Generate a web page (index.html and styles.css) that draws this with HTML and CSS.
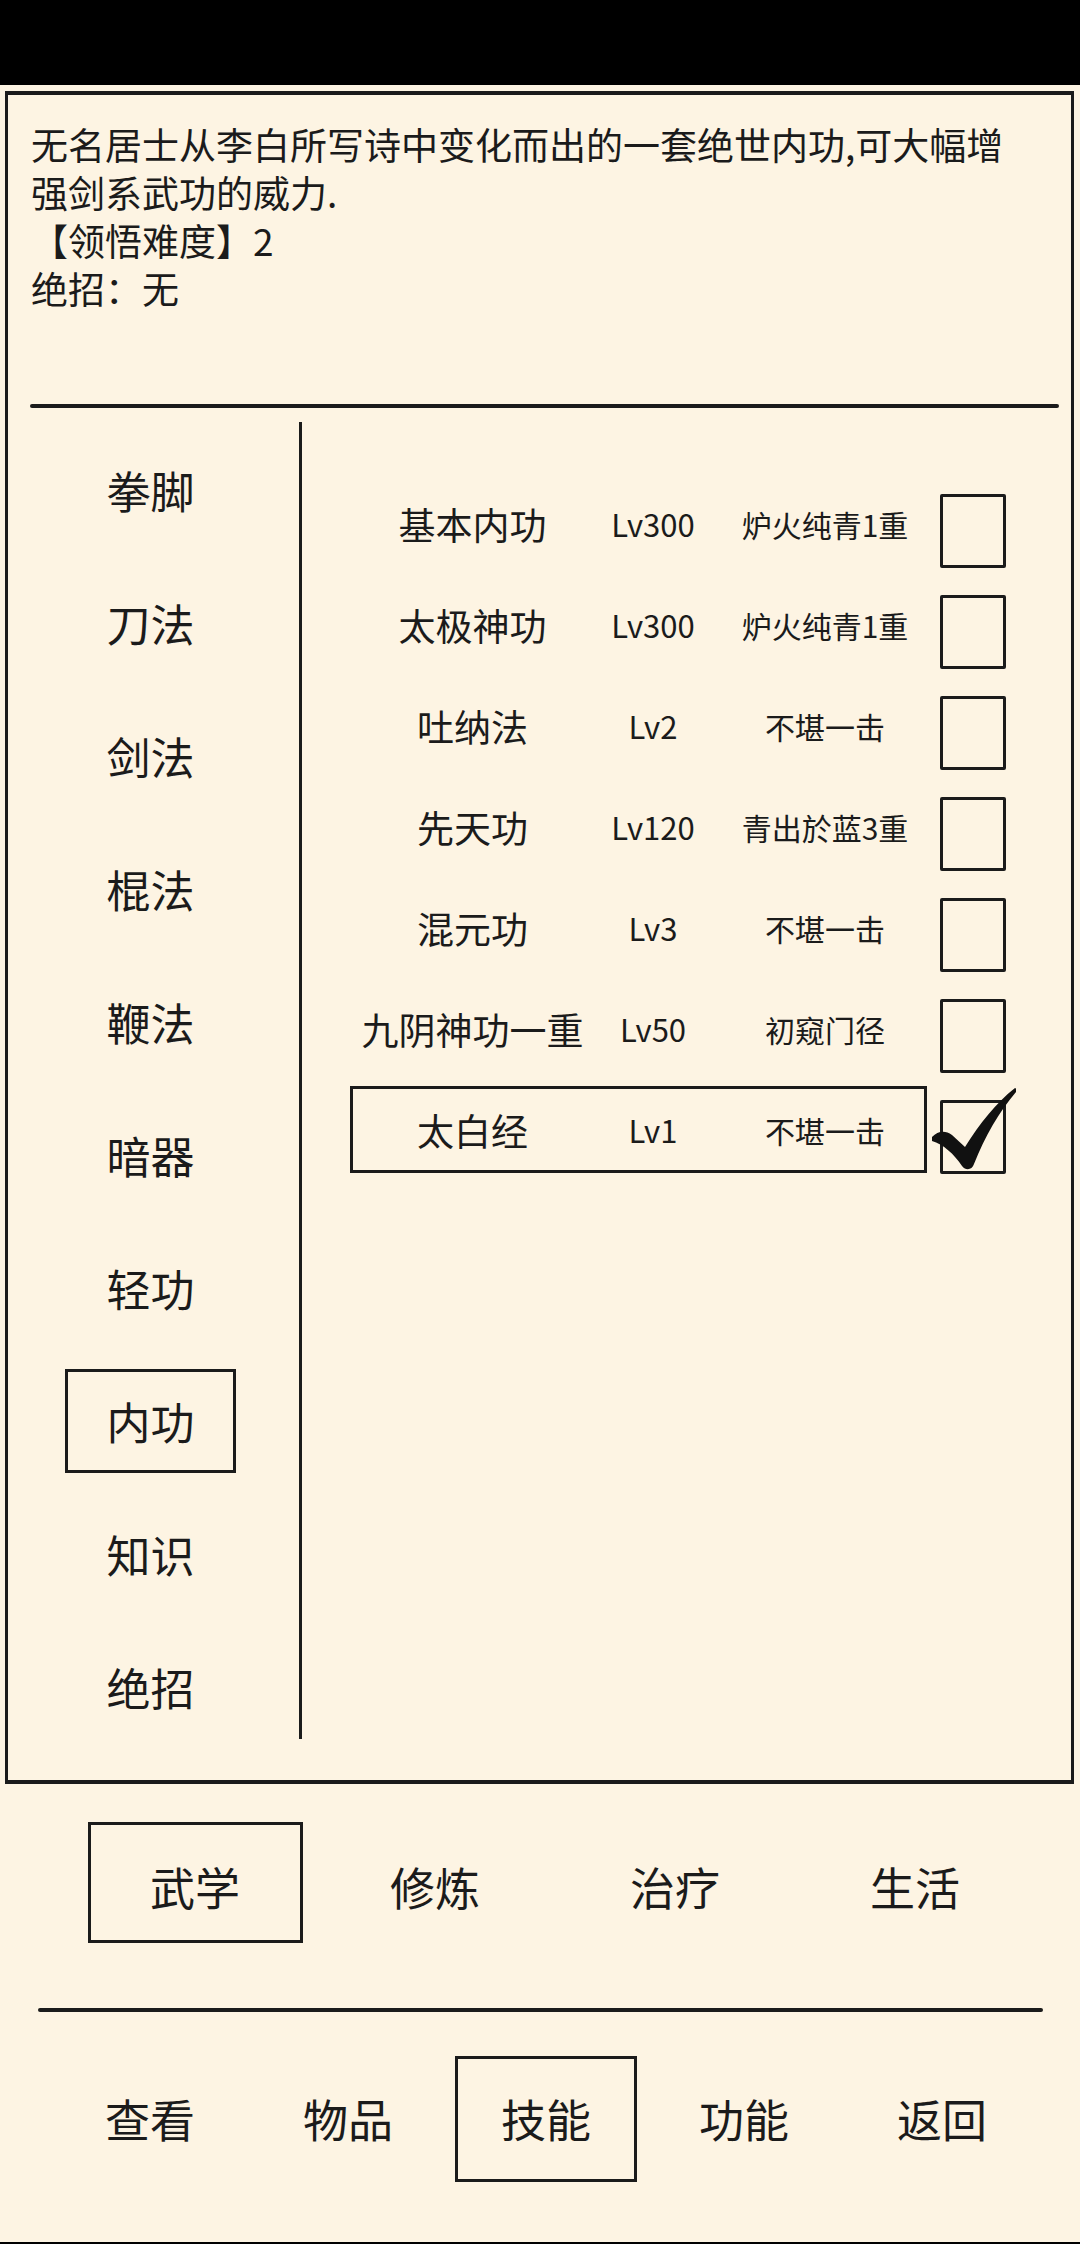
FILE: index.html
```html
<!DOCTYPE html>
<html lang="zh-CN">
<head>
<meta charset="utf-8">
<title>技能</title>
<link rel="stylesheet" href="styles.css">
</head>
<body>
<div class="status"></div>
<div class="panel">
  <div class="desc">
    <p>无名居士从李白所写诗中变化而出的一套绝世内功,可大幅增强剑系武功的威力.</p>
    <p>【领悟难度】2</p>
    <p>绝招：无</p>
  </div>
  <div class="hr"></div>
  <div class="main">
    <ul class="cats">
      <li><span>拳脚</span></li>
      <li><span>刀法</span></li>
      <li><span>剑法</span></li>
      <li><span>棍法</span></li>
      <li><span>鞭法</span></li>
      <li><span>暗器</span></li>
      <li><span>轻功</span></li>
      <li class="active"><span>内功</span></li>
      <li><span>知识</span></li>
      <li><span>绝招</span></li>
    </ul>
    <div class="vr"></div>
    <div class="skills">
      <div class="row"><div class="cell"><span class="name">基本内功</span><span class="lv">Lv300</span><span class="rank">炉火纯青1重</span></div><div class="check"></div></div>
      <div class="row"><div class="cell"><span class="name">太极神功</span><span class="lv">Lv300</span><span class="rank">炉火纯青1重</span></div><div class="check"></div></div>
      <div class="row"><div class="cell"><span class="name">吐纳法</span><span class="lv">Lv2</span><span class="rank">不堪一击</span></div><div class="check"></div></div>
      <div class="row"><div class="cell"><span class="name">先天功</span><span class="lv">Lv120</span><span class="rank">青出於蓝3重</span></div><div class="check"></div></div>
      <div class="row"><div class="cell"><span class="name">混元功</span><span class="lv">Lv3</span><span class="rank">不堪一击</span></div><div class="check"></div></div>
      <div class="row"><div class="cell"><span class="name">九阴神功一重</span><span class="lv">Lv50</span><span class="rank">初窥门径</span></div><div class="check"></div></div>
      <div class="row sel"><div class="cell"><span class="name">太白经</span><span class="lv">Lv1</span><span class="rank">不堪一击</span></div><div class="check on"><svg class="tick" viewBox="0 0 86 84" width="86" height="84"><path d="M2 51 C8 45 15 44 22 49 L35 61 C50 37 66 17 85 2 C87 3 87 5 86 6 C69 26 55 50 44 78 C42 84 36 85 32 80 C24 68 13 58 2 55 Z"/></svg></div></div>
    </div>
  </div>
</div>
<div class="tabs">
  <div class="tab active">武学</div>
  <div class="tab">修炼</div>
  <div class="tab">治疗</div>
  <div class="tab">生活</div>
</div>
<div class="hr2"></div>
<nav class="nav">
  <div class="navi">查看</div>
  <div class="navi">物品</div>
  <div class="navi active">技能</div>
  <div class="navi">功能</div>
  <div class="navi">返回</div>
</nav>
<div class="edge"></div>
</body>
</html>
```

FILE: styles.css
```css
html, body {
  margin: 0;
  padding: 0;
  background: #fdf4e3;
}
body {
  width: 1080px;
  height: 2244px;
  display: flex;
  flex-direction: column;
  font-family: "Noto Sans CJK SC", "Noto Sans", sans-serif;
  color: #1b1b1b;
  overflow: hidden;
}
.status {
  height: 85px;
  background: #000;
  flex: none;
}
.panel {
  flex: none;
  margin: 6px 6px 0 5px;
  height: 1693px;
  box-sizing: border-box;
  border: 3px solid #1b1b1b;
  border-top-width: 4px;
  border-bottom-width: 4px;
  display: flex;
  flex-direction: column;
}
.desc {
  height: 309px;
  box-sizing: border-box;
  padding: 25px 49px 0 23px;
  font-size: 37px;
  line-height: 48px;
}
.desc p {
  margin: 0;
}
.hr {
  height: 4px;
  background: #1b1b1b;
  margin: 0 12px 0 22px;
  border-radius: 2px;
}
.main {
  flex: 1;
  display: flex;
}
.cats {
  list-style: none;
  margin: 0;
  padding: 15px 0 0 0;
  width: 285px;
  font-size: 44px;
}
.cats li {
  height: 133px;
  display: flex;
  align-items: center;
  justify-content: center;
}
.cats li span {
  width: 171px;
  height: 104px;
  box-sizing: border-box;
  border: 3px solid transparent;
  display: flex;
  align-items: center;
  justify-content: center;
}
.cats li.active span {
  border-color: #1b1b1b;
}
.vr {
  width: 3px;
  background: #1b1b1b;
  margin: 14px 0 41px 6px;
}
.skills {
  flex: 1;
  padding: 65px 0 0 48px;
}
.row {
  height: 101px;
  display: flex;
  align-items: center;
}
.cell {
  width: 577px;
  height: 87px;
  box-sizing: border-box;
  border: 3px solid transparent;
  display: grid;
  grid-template-columns: 239px 122px 1fr;
  align-items: center;
  text-align: center;
}
.row.sel .cell {
  border-color: #1b1b1b;
}
.name {
  font-size: 37px;
}
.lv {
  font-size: 31px;
}
.rank {
  font-size: 30px;
  padding-left: 12px;
}
.check {
  position: relative;
  width: 66px;
  height: 74px;
  box-sizing: border-box;
  border: 3px solid #1b1b1b;
  border-radius: 2px;
  margin: 14px 0 0 13px;
}
.tick {
  position: absolute;
  left: -13px;
  top: -17px;
  fill: #111;
}
.tabs {
  flex: none;
  margin-top: 38px;
  padding-left: 75px;
  display: grid;
  grid-template-columns: repeat(4, 240px);
  justify-items: center;
  font-size: 45px;
}
.tab {
  width: 215px;
  height: 121px;
  box-sizing: border-box;
  border: 3px solid transparent;
  display: flex;
  align-items: center;
  justify-content: center;
  padding-top: 8px;
}
.tab.active {
  border-color: #1b1b1b;
}
.hr2 {
  flex: none;
  height: 4px;
  background: #1b1b1b;
  margin: 65px 37px 0 38px;
  border-radius: 2px;
}
.nav {
  flex: none;
  margin-top: 44px;
  padding-left: 51px;
  display: grid;
  grid-template-columns: repeat(5, 198px);
  justify-items: center;
  font-size: 45px;
}
.navi {
  width: 182px;
  height: 126px;
  box-sizing: border-box;
  border: 3px solid transparent;
  display: flex;
  align-items: center;
  justify-content: center;
  padding-bottom: 2px;
}
.navi.active {
  border-color: #1b1b1b;
}
.edge {
  margin-top: auto;
  height: 2px;
  background: #000;
  flex: none;
}
```
